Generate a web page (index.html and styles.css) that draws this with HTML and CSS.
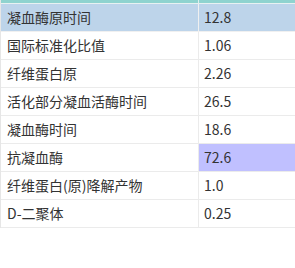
FILE: index.html
```html
<!DOCTYPE html>
<html lang="zh">
<head>
<meta charset="utf-8">
<link rel="stylesheet" href="styles.css">
</head>
<body>
<div class="grid">
  <div class="head"></div><div class="head end"></div>
  <div class="cell sel">凝血酶原时间</div><div class="cell sel val">12.8</div>
  <div class="cell">国际标准化比值</div><div class="cell val">1.06</div>
  <div class="cell">纤维蛋白原</div><div class="cell val">2.26</div>
  <div class="cell">活化部分凝血活酶时间</div><div class="cell val">26.5</div>
  <div class="cell">凝血酶时间</div><div class="cell val">18.6</div>
  <div class="cell">抗凝血酶</div><div class="cell val mark">72.6</div>
  <div class="cell">纤维蛋白(原)降解产物</div><div class="cell val">1.0</div>
  <div class="cell">D-二聚体</div><div class="cell val">0.25</div>
</div>
</body>
</html>
```
FILE: styles.css
```css
html, body {
  margin: 0;
  padding: 0;
  background: #ffffff;
}
body {
  width: 295px;
  height: 268px;
  overflow: hidden;
  font-family: "Noto Sans CJK SC", "Noto Sans", sans-serif;
  font-size: 14px;
  color: #333333;
}
.grid {
  display: grid;
  grid-template-columns: 198px 1fr;
  width: 295px;
  box-sizing: border-box;
  border-left: 1px solid #e6e6e6;
}
.grid > div {
  box-sizing: border-box;
}
.head {
  height: 4px;
  background: #8fd3cf;
  border-bottom: 1px solid #e8f1f1;
  border-right: 1px solid #e0eeee;
}
.cell {
  height: 28px;
  line-height: 27px;
  padding-left: 6px;
  border-bottom: 1px solid #ebebeb;
  border-right: 1px solid #ebebeb;
  white-space: nowrap;
  overflow: hidden;
}
.val, .end {
  padding-left: 5px;
  border-right: none;
}
.sel {
  background: #bdd4ea;
  border-bottom-color: #f0f0f0;
  border-right-color: #f0f0f0;
}
.mark {
  background: #c0c0ff;
}
```
